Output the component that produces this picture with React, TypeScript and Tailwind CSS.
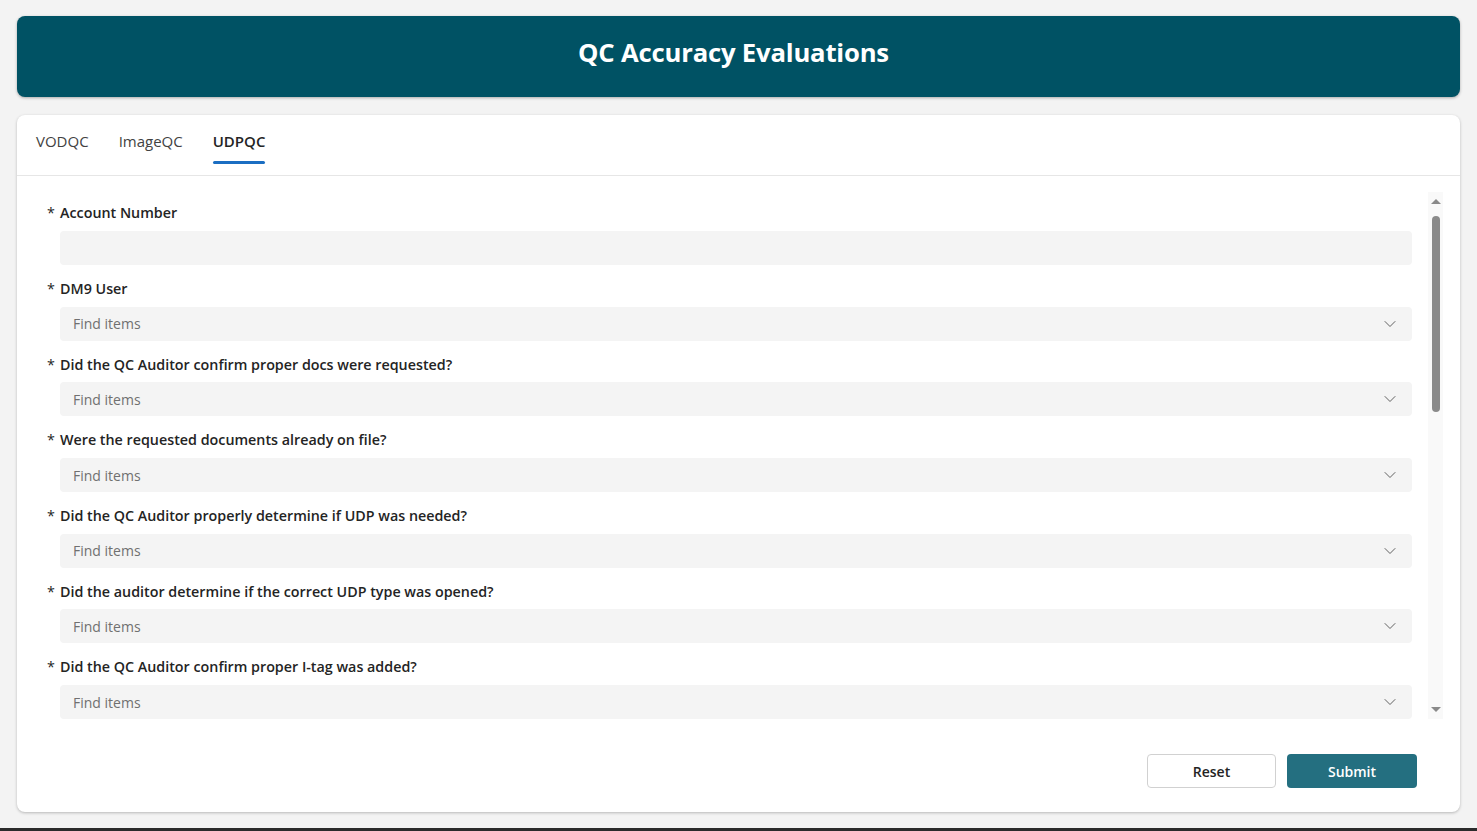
import React from 'react';
import { ChevronDown } from 'lucide-react';

const fields: { label: string; kind: 'input' | 'select' }[] = [
  { label: 'Account Number', kind: 'input' },
  { label: 'DM9 User', kind: 'select' },
  { label: 'Did the QC Auditor confirm proper docs were requested?', kind: 'select' },
  { label: 'Were the requested documents already on file?', kind: 'select' },
  { label: 'Did the QC Auditor properly determine if UDP was needed?', kind: 'select' },
  { label: 'Did the auditor determine if the correct UDP type was opened?', kind: 'select' },
  { label: 'Did the QC Auditor confirm proper I-tag was added?', kind: 'select' },
];

const tabs = ['VODQC', 'ImageQC', 'UDPQC'];

const Field: React.FC<{ label: string; kind: 'input' | 'select' }> = ({ label, kind }) => (
  <div className="mb-[13.7px]">
    <div className="flex items-center h-5 text-[14.3px] text-[#242424] font-semibold">
      <span className="w-[13px] font-normal text-[#242424]">*</span>
      <span>{label}</span>
    </div>
    <div className="ml-[13px] mt-2 h-[34px] rounded-[4px] bg-[#f4f4f4] flex items-center justify-between pl-[13px] pr-[12px]">
      {kind === 'select' && (
        <>
          <span className="text-[14px] text-[#707070]">Find items</span>
          <ChevronDown size={20} strokeWidth={1.2} className="text-[#616161]" />
        </>
      )}
    </div>
  </div>
);

export default function App() {
  return (
    <div
      className="h-[831px] w-full overflow-hidden bg-[#f3f3f3] flex flex-col"
      style={{ fontFamily: '"Open Sans", "Noto Sans", sans-serif' }}
    >
      <div className="flex-1 px-[17px] pt-[16px] flex flex-col gap-[18px]">
        <header className="h-[81px] rounded-[8px] bg-[#005264] shadow-[0_1px_3px_rgba(0,0,0,0.3)] flex items-center justify-center pb-[6px] pr-[10px]">
          <h1 className="text-white text-[25.7px] font-bold tracking-[-0.2px]">QC Accuracy Evaluations</h1>
        </header>

        <div className="h-[697px] rounded-[8px] bg-white shadow-[0_1px_3px_rgba(0,0,0,0.25)] flex flex-col overflow-hidden">
          <div className="h-[61px] flex items-end pl-[16px] gap-[24px] border-b border-[#e6e6e6]">
            {tabs.map((t) => (
              <div key={t} className="flex flex-col items-center px-[3px]">
                <span
                  className={`text-[15px] leading-5 pb-[10px] ${
                    t === 'UDPQC' ? 'font-semibold text-[#242424]' : 'text-[#424242]'
                  }`}
                >
                  {t}
                </span>
                <span
                  className={`h-[3px] w-full rounded-full mb-[11px] ${t === 'UDPQC' ? 'bg-[#1b6ec2]' : 'bg-transparent'}`}
                />
              </div>
            ))}
          </div>

          <div className="flex-1 flex flex-col pl-[30px] pr-[17px] pt-[16px] pb-[24px]">
            <div className="flex h-[527px]">
              <div className="flex-1 overflow-hidden pt-[11px] pr-[16px]">
                {fields.map((f) => (
                  <Field key={f.label} label={f.label} kind={f.kind} />
                ))}
              </div>
              <div className="w-[15px] bg-[#f9f9f9] flex flex-col items-center py-[7px]">
                <span className="w-0 h-0 border-l-[5px] border-r-[5px] border-b-[5px] border-l-transparent border-r-transparent border-b-[#8a8a8a]" />
                <span className="mt-[12px] w-[8px] h-[196px] rounded-full bg-[#8a8a8a]" />
                <span className="flex-1" />
                <span className="w-0 h-0 border-l-[5px] border-r-[5px] border-t-[5px] border-l-transparent border-r-transparent border-t-[#8a8a8a]" />
              </div>
            </div>

            <div className="flex-1 flex items-end justify-end gap-[11px] pr-[26px]">
              <button className="w-[129px] h-[34px] rounded-[4px] border border-[#d1d1d1] bg-white text-[14px] font-semibold text-[#242424]">
                Reset
              </button>
              <button className="w-[130px] h-[34px] rounded-[4px] bg-[#246f80] text-[14px] font-semibold text-white">
                Submit
              </button>
            </div>
          </div>
        </div>
      </div>
      <div className="h-[3px] bg-[#2b2b2b]" />
    </div>
  );
}
